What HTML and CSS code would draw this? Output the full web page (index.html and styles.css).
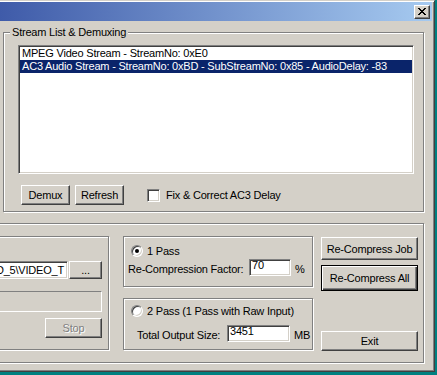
FILE: index.html
```html
<!DOCTYPE html>
<html lang="en">
<head>
  <meta charset="UTF-8" />
  <meta name="viewport" content="width=device-width, initial-scale=1.0"/>
  <title>Re-Compress</title>
  <link rel="stylesheet" href="styles.css">
</head>
<body>
  <div class="window">
    <div class="caption">
      <button class="btn close" title="Close">
        <svg width="8" height="7" viewBox="0 0 8 7" shape-rendering="crispEdges">
          <path fill="#000" d="M0 0h2v1H0z M6 0h2v1H6z M1 1h2v1H1z M5 1h2v1H5z M2 2h4v1H2z M3 3h2v1H3z M2 4h4v1H2z M1 5h2v1H1z M5 5h2v1H5z M0 6h2v1H0z M6 6h2v1H6z"/>
        </svg>
      </button>
    </div>

    <div class="group streams">
      <span class="group-title">Stream List &amp; Demuxing</span>
      <div class="listbox">
        <div class="item">MPEG Video Stream - StreamNo: 0xE0</div>
        <div class="item selected">AC3 Audio Stream - StreamNo: 0xBD - SubStreamNo: 0x85 - AudioDelay: -83</div>
      </div>
      <div class="stream-actions">
        <button class="btn demux">Demux</button>
        <button class="btn refresh">Refresh</button>
        <label class="check"><span class="checkbox"></span>Fix &amp; Correct AC3 Delay</label>
      </div>
    </div>

    <div class="group compress">
      <div class="group source">
        <div class="path-row">
          <div class="textbox path"><span>E:\DVD_5\VIDEO_T</span></div>
          <button class="btn browse">...</button>
        </div>
        <div class="progress"></div>
        <button class="btn stop" disabled>Stop</button>
      </div>

      <div class="passes">
        <div class="group pass one">
          <label class="radio-row"><span class="radio checked"></span>1 Pass</label>
          <div class="field-row">
            <span class="field-label factor-label">Re-Compression Factor:</span>
            <div class="textbox field factor">70</div>
            <span class="unit">%</span>
          </div>
        </div>
        <div class="group pass two">
          <label class="radio-row"><span class="radio"></span>2 Pass (1 Pass with Raw Input)</label>
          <div class="field-row">
            <span class="field-label size-label">Total Output Size:</span>
            <div class="textbox field size">3451</div>
            <span class="unit">MB</span>
          </div>
        </div>
      </div>

      <div class="actions">
        <button class="btn job">Re-Compress Job</button>
        <button class="btn all default">Re-Compress All</button>
        <button class="btn exit">Exit</button>
      </div>
    </div>
  </div>
</body>
</html>
```

FILE: styles.css
```css
* {
  box-sizing: border-box;
}
body {
  margin: 0;
  width: 437px;
  height: 375px;
  overflow: hidden;
  background: #008080;
  font-family: "Liberation Sans", Arial, sans-serif;
  font-size: 11px;
  letter-spacing: -0.2px;
  color: #000;
}
.window {
  width: 435px;
  height: 372px;
  background: #d4d0c8;
  border-style: solid;
  border-width: 1px 1px 1px 0;
  border-color: #d4d0c8 #404040 #404040;
  padding: 1px 2px 2px 0;
  box-shadow: inset 0 1px #fff, inset -1px -1px #808080;
}
.caption {
  height: 19px;
  display: flex;
  justify-content: flex-end;
  align-items: flex-start;
  padding: 3px 2px 0 0;
  background: linear-gradient(to right, #3f5ba9, #a6caf0);
}

/* push buttons */
.btn {
  font: inherit;
  letter-spacing: inherit;
  color: #000;
  background: #d4d0c8;
  border: 1px solid;
  border-color: #fff #404040 #404040 #fff;
  box-shadow: inset -1px -1px #808080;
  padding: 0;
  flex: none;
}
.btn.default {
  border-color: #000;
  box-shadow: inset 1px 1px #fff, inset -1px -1px #404040, inset -2px -2px #808080;
}
.btn:disabled {
  color: #808080;
  text-shadow: 1px 1px 0 #fff;
}
.close {
  width: 16px;
  height: 14px;
  display: flex;
  align-items: center;
  justify-content: center;
}
.close svg {
  display: block;
  margin: 0 1px 1px 0;
}

/* etched group boxes */
.group {
  border: 1px solid #808080;
  box-shadow: inset 1px 1px #fff, 1px 1px #fff;
}
.group-title {
  display: block;
  height: 13px;
  line-height: 13px;
  margin: -7px 0 0 6px;
  padding: 0 2px;
  background: #d4d0c8;
}
.streams {
  width: 421px;
  height: 180px;
  margin: 11px 0 0 3px;
  display: flex;
  flex-direction: column;
  align-items: flex-start;
}

/* sunken fields */
.listbox, .textbox {
  background: #fff;
  border: 1px solid;
  border-color: #808080 #fff #fff #808080;
  box-shadow: inset 1px 1px #404040, inset -1px -1px #d4d0c8;
}
.listbox {
  width: 396px;
  height: 129px;
  margin: 6px 0 0 14px;
  padding: 1px;
}
.item {
  height: 13px;
  line-height: 13px;
  padding-left: 2px;
  white-space: nowrap;
}
.item.selected {
  background: #0a246a;
  color: #fff;
}
.stream-actions {
  display: flex;
  align-items: center;
  margin: 11px 0 0 17px;
}
.demux, .refresh {
  width: 49px;
  height: 20px;
}
.refresh {
  margin-left: 5px;
}
.check {
  display: flex;
  align-items: center;
  margin-left: 23px;
}
.checkbox {
  width: 13px;
  height: 13px;
  margin-right: 6px;
  background: #fff;
  border: 1px solid;
  border-color: #808080 #fff #fff #808080;
  box-shadow: inset 1px 1px #404040, inset -1px -1px #d4d0c8;
}

/* lower panel */
.compress {
  width: 444px;
  height: 140px;
  margin: 11px 0 0 -20px;
  padding: 12px 5px 0 7px;
  display: flex;
  align-items: flex-start;
}
.source {
  width: 121px;
  height: 114px;
  padding: 24px 6px 0 0;
  display: flex;
  flex-direction: column;
  align-items: flex-end;
}
.path-row {
  align-self: stretch;
  display: flex;
}
.path {
  flex: 1;
  height: 18px;
  margin-right: 1px;
  display: flex;
  justify-content: flex-end;
  align-items: center;
  overflow: hidden;
  padding-right: 3px;
  white-space: nowrap;
}
.browse {
  width: 33px;
  height: 18px;
}
.progress {
  align-self: stretch;
  height: 21px;
  margin-top: 12px;
  border: 1px solid;
  border-color: #808080 #fff #fff #808080;
}
.stop {
  width: 57px;
  height: 20px;
  margin-top: 6px;
}

.passes {
  width: 190px;
  margin-left: 14px;
  display: flex;
  flex-direction: column;
}
.pass {
  display: flex;
  flex-direction: column;
  align-items: flex-start;
}
.pass.one {
  height: 51px;
}
.pass.two {
  height: 52px;
  margin-top: 11px;
}
.radio-row {
  display: flex;
  align-items: center;
  height: 12px;
  margin-left: 7px;
}
.one .radio-row {
  margin-top: 8px;
}
.two .radio-row {
  margin-top: 6px;
}
.radio {
  width: 12px;
  height: 12px;
  margin-right: 4px;
  border-radius: 50%;
  background: #fff;
  border: 1px solid;
  border-color: #808080 #fff #fff #808080;
  box-shadow: inset 1px 1px #404040, inset -1px -1px #d4d0c8;
  display: flex;
  align-items: center;
  justify-content: center;
}
.radio.checked::after {
  content: "";
  width: 4px;
  height: 4px;
  border-radius: 50%;
  background: #000;
}
.field-row {
  display: flex;
  align-items: center;
}
.one .field-row {
  margin: 2px 0 0 4px;
}
.two .field-row {
  margin: 8px 0 0 13px;
}
.field-label {
  padding-top: 3px;
  white-space: nowrap;
}
.factor-label {
  width: 121px;
}
.size-label {
  width: 90px;
}
.field {
  height: 17px;
  line-height: 10px;
  padding: 0 2px;
}
.factor {
  width: 42px;
}
.size {
  width: 63px;
}
.unit {
  margin-left: 4px;
  padding-top: 3px;
}

.actions {
  width: 97px;
  height: 115px;
  margin-left: 8px;
  display: flex;
  flex-direction: column;
}
.actions .btn {
  width: 97px;
}
.job {
  height: 23px;
  margin-top: 1px;
}
.all {
  height: 26px;
  margin-top: 5px;
}
.exit {
  height: 20px;
  margin-top: auto;
}
```
